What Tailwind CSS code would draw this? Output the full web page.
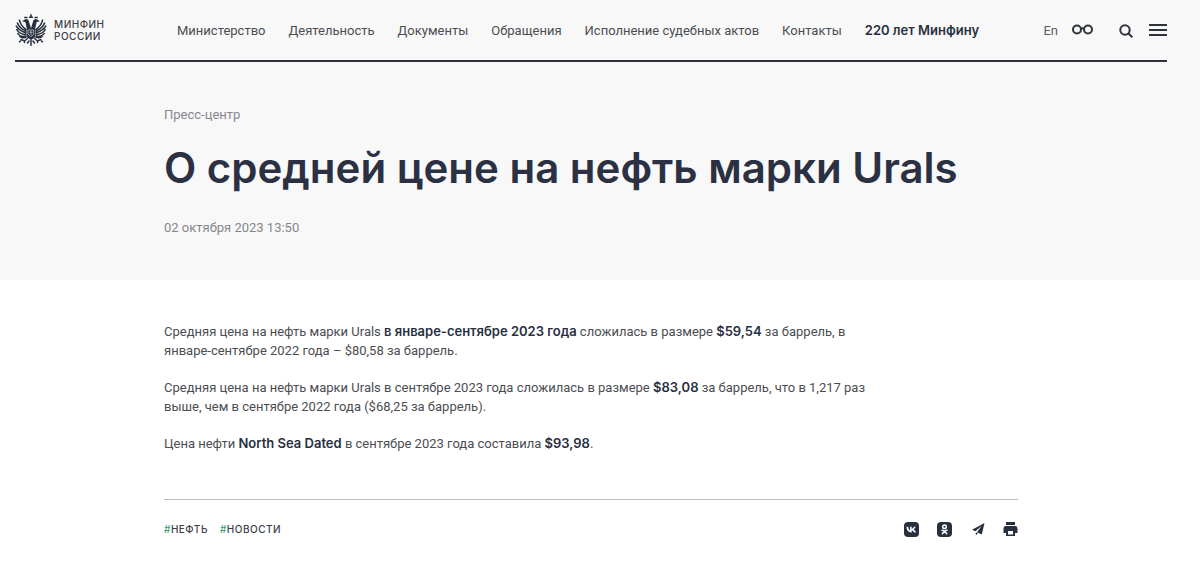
<!DOCTYPE html>
<html lang="ru">
<head>
  <meta charset="UTF-8" />
  <meta name="viewport" content="width=device-width, initial-scale=1.0"/>
  <title>О средней цене на нефть марки Urals</title>
  <script src="https://cdn.jsdelivr.net/npm/@tailwindcss/browser@4"></script>
</head>
<body class="bg-white font-['Roboto','Liberation_Sans',sans-serif] text-[13px] text-[#4b4d52]">
  <div class="bg-[#f8f8f8] pb-[42px]">
    <header class="ml-[15px] mr-[33px] h-[62px] flex items-center border-b-2 border-[#2f333c]">
      <a href="#" class="w-[162px] shrink-0 flex items-center gap-[7px] text-[10px] leading-3 font-medium tracking-wider text-[#3d4047] font-['Inter','Liberation_Sans',sans-serif]">
        <!-- double-headed eagle -->
        <svg class="size-8" viewBox="0 0 32 32" fill="none" stroke="#28303f" stroke-linecap="round" aria-hidden="true">
          <path d="M16 14.500c-.6-3-1.600-5-2-7-.3-1.500-1.300-2.500-2.700-2.500-1.600 0-2.300 1-4.300 2.400 1.700 0 2.900 0 3.500 1.200.5 1.800.5 3.400 1.300 5.400V23l4.200 3 4.200-3v-9c.8-2 .8-3.600 1.300-5.400.6-1.200 1.800-1.200 3.500-1.200C23 6 22.300 5 20.700 5 19.300 5 18.300 6 18 7.500c-.4 2-1.400 4-2 7z" fill="#28303f" stroke="none"/>
          <path d="M11.500 16C7.500 13 4.800 9 4.300 5.500M11.500 17.500C7 15.500 3.500 12 2.200 8.500M11.500 19C6.500 17.500 2.500 15 1 11.500M11.500 20.500c-4 0-8.500-2-10-5.500M11.500 22c-3.500 1-7.500 0-9-3M11.500 23c-2 1-5.500 1-7-1" stroke-width="1.600" stroke-linecap="butt"/>
          <path d="M20.500 16c4-3 6.700-7 7.200-10.500M20.500 17.500c4.500-2 8-5.500 9.300-9M20.500 19c5-1.500 9-4 10.500-7.500M20.500 20.500c4 0 8.500-2 10-5.500M20.500 22c3.500 1 7.500 0 9-3M20.500 23c2 1 5.500 1 7-1" stroke-width="1.600" stroke-linecap="butt"/>
          <path d="M12.500 24.500l-3 2.500-3.500-1.500M19.500 24.500l3 2.500 3.500-1.500M9.500 27.500v1M22.500 27.500v1M14 27l-1.500 2M18 27l1.500 2M16 26v5.300M5.500 27l-1 .8M26.500 27l1 .8" stroke-width="1.500"/>
          <path d="M14.500 3.300h3M16 .8v2M9.800 3.500h2M20.200 3.500h2" stroke-width="1.600"/>
          <path d="M13.300 16h5.400v4.500L16 22.500l-2.700-2zM16 17v3.500M14.800 18.300h2.400" stroke="#c0c3c9" stroke-width=".8"/>
        </svg>
        <span>МИНФИН<br>РОССИИ</span>
      </a>
      <nav class="pt-0.5 flex items-center gap-[23px] whitespace-nowrap">
        <a href="#">Министерство</a>
        <a href="#">Деятельность</a>
        <a href="#">Документы</a>
        <a href="#">Обращения</a>
        <a href="#">Исполнение судебных актов</a>
        <a href="#">Контакты</a>
        <a href="#" class="font-['Inter','Liberation_Sans',sans-serif] font-semibold text-[#28303f]">220 лет Минфину</a>
      </nav>
      <div class="ml-auto pt-0.5 flex items-center text-[#2f333c]">
        <a href="#" class="mr-[14px] text-[#5b5d62]">En</a>
        <button type="button" aria-label="Версия для слабовидящих" class="mr-[26px]">
          <svg class="w-[21px] h-[14px]" viewBox="0 0 21 14" fill="none" stroke="currentColor" stroke-width="2">
            <circle cx="5" cy="5.500" r="4"/><circle cx="16" cy="5.500" r="4"/><path d="M8.500 4.800q2-1.200 4 0"/>
          </svg>
        </button>
        <button type="button" aria-label="Поиск" class="mr-4">
          <svg class="size-[14px]" viewBox="0 0 14 14" fill="none" stroke="currentColor" stroke-width="2">
            <circle cx="6" cy="6" r="4.700"/><path d="M9.300 9.300l4 4"/>
          </svg>
        </button>
        <button type="button" aria-label="Меню">
          <svg class="w-[18px] h-[14px]" viewBox="0 0 18 14" fill="currentColor">
            <path d="M0 0h18v2H0zM0 5h18v2H0zM0 10h18v2H0z"/>
          </svg>
        </button>
      </div>
    </header>

    <div class="mx-[164px] pt-[43px] text-[#85878c]">
      <a href="#" class="block leading-5">Пресс-центр</a>
      <h1 class="mt-[18px] font-['Inter','Liberation_Sans',sans-serif] text-[42px] leading-[50px] font-semibold text-[#2b3042]">О средней цене на нефть марки Urals</h1>
      <time datetime="2023-10-02T13:50" class="block mt-[25px] leading-5">02 октября 2023 13:50</time>
    </div>
  </div>

  <main class="ml-[164px] mr-[182px] pt-[42px]">
    <article class="max-w-[720px] space-y-[18px] leading-[19px] [&_b]:font-['Inter','Liberation_Sans',sans-serif] [&_b]:font-semibold [&_b]:text-[#28303f]">
      <p>Средняя цена на нефть марки Urals <b>в январе-сентябре 2023 года</b> сложилась в размере <b>$59,54</b> за баррель, в<br>январе-сентябре 2022 года – $80,58 за баррель.</p>
      <p>Средняя цена на нефть марки Urals в сентябре 2023 года сложилась в размере <b>$83,08</b> за баррель, что в 1,217 раз<br>выше, чем в сентябре 2022 года ($68,25 за баррель).</p>
      <p>Цена нефти <b>North Sea Dated</b> в сентябре 2023 года составила <b>$93,98</b>.</p>
    </article>

    <footer class="mt-[46px] pt-[22px] flex items-center justify-between border-t border-[#bdbdbd]">
      <div class="flex gap-3 text-[10px] font-medium tracking-wider text-[#3d4047] font-['Inter','Liberation_Sans',sans-serif]">
        <a href="#"><span class="text-[#2fa36f]">#</span>НЕФТЬ</a>
        <a href="#"><span class="text-[#2fa36f]">#</span>НОВОСТИ</a>
      </div>
      <div class="flex items-center gap-[18px] text-[#28303f]">
        <a href="#" aria-label="ВКонтакте">
          <svg class="size-[15px]" viewBox="0 0 15 15">
            <rect width="15" height="15" rx="4" fill="currentColor"/>
            <path d="M2.500 4.800h1.700c.1 2 1 3.300 1.900 3.600V4.800h1.600v2.100c1-.1 1.900-1.200 2.200-2.100h1.700c-.3 1.200-1.200 2.200-2 2.700.8.400 1.900 1.300 2.400 2.900h-1.800c-.4-1-1.300-1.900-2.500-2v2H7.400C4.300 10.400 2.600 8.300 2.500 4.800z" fill="#fff"/>
          </svg>
        </a>
        <a href="#" aria-label="Одноклассники">
          <svg class="size-[15px]" viewBox="0 0 15 15" fill="none" stroke="#fff" stroke-width="1.500" stroke-linecap="round">
            <rect width="15" height="15" rx="4" fill="currentColor" stroke="none"/>
            <circle cx="7.500" cy="4.700" r="1.800"/><path d="M5 8.200q2.500 1.700 5 0M7.500 9.200l-2.200 2.500M7.500 9.200l2.200 2.500"/>
          </svg>
        </a>
        <a href="#" aria-label="Telegram">
          <svg class="size-[15px]" viewBox="0 0 15 15" fill="currentColor">
            <path d="M14.500 1L2 7.700l3.400 1.600L11.500 4 7 10.200l4.800 2.300zM5.800 10.200v3.300l2-2.200z"/>
          </svg>
        </a>
        <button type="button" aria-label="Печать">
          <svg class="size-[15px]" viewBox="0 0 15 15" fill="currentColor">
            <path d="M3 0h9v3H3z"/>
            <path d="M3 4h9a2.500 2.500 0 0 1 2.500 2.500V11H12v3H3v-3H.5V6.500A2.500 2.500 0 0 1 3 4zM5 9v3.500h5V9z" fill-rule="evenodd"/>
          </svg>
        </button>
      </div>
    </footer>
  </main>
</body>
</html>
